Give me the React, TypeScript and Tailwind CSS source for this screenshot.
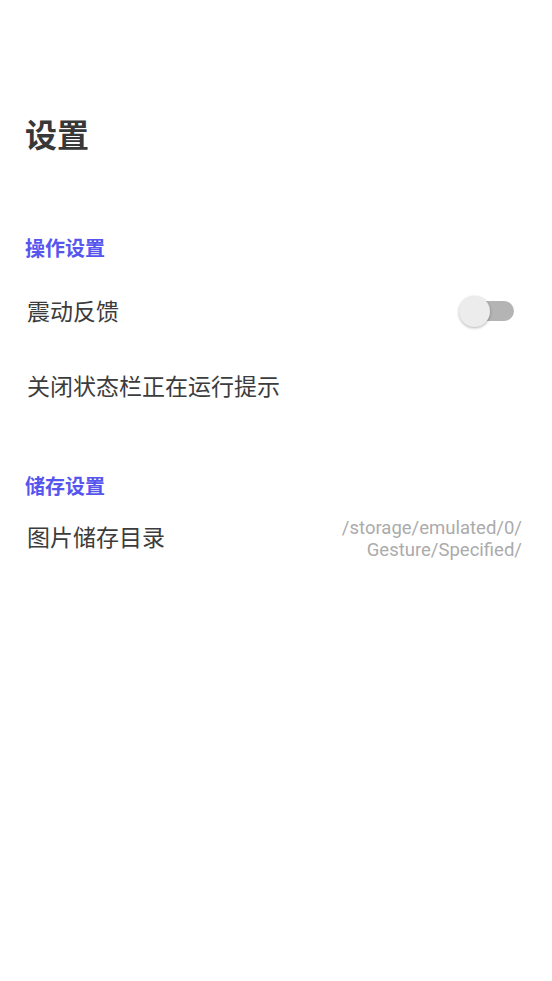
import React from "react";

const cjk = { fontFamily: '"Noto Sans CJK SC", "Noto Sans", sans-serif' };
const roboto = { fontFamily: 'Roboto, "Noto Sans", sans-serif' };

function Switch() {
  return (
    <div className="relative w-[55px] h-[32px] flex items-center">
      <div className="absolute left-[2px] right-0 h-[20px] rounded-full bg-[#b4b4b4]" />
      <div className="absolute left-0 top-[1px] w-[31px] h-[31px] rounded-full bg-[#ececec] shadow-[0_1px_3px_rgba(0,0,0,0.3)]" />
    </div>
  );
}

export default function App() {
  return (
    <div className="w-[552px] h-[981px] bg-white flex flex-col" style={cjk}>
      <div className="pt-[113px] pl-[25px] h-[154px] text-[32px] leading-[41px] font-bold text-[#383838]">
        设置
      </div>
      <div className="mt-[80px] pl-[25px] h-[28px] text-[20px] leading-[28px] font-bold text-[#5656ee]">
        操作设置
      </div>
      <div className="mt-[11px] h-[75px] flex items-center justify-between pl-[27px] pr-[38px]">
        <span className="text-[23px] text-[#3c3c3c]">震动反馈</span>
        <Switch />
      </div>
      <div className="h-[75px] flex items-center pl-[27px]">
        <span className="text-[23px] text-[#3c3c3c]">关闭状态栏正在运行提示</span>
      </div>
      <div className="mt-[49px] pl-[25px] h-[28px] text-[20px] leading-[28px] font-bold text-[#5656ee]">
        储存设置
      </div>
      <div className="h-[72px] flex items-center justify-between pl-[27px] pr-[30px]">
        <span className="text-[23px] text-[#3c3c3c]">图片储存目录</span>
        <div className="mt-[6px] text-right text-[18.5px] leading-[22px] text-[#ababab]" style={roboto}>
          <div>/storage/emulated/0/</div>
          <div>Gesture/Specified/</div>
        </div>
      </div>
    </div>
  );
}
